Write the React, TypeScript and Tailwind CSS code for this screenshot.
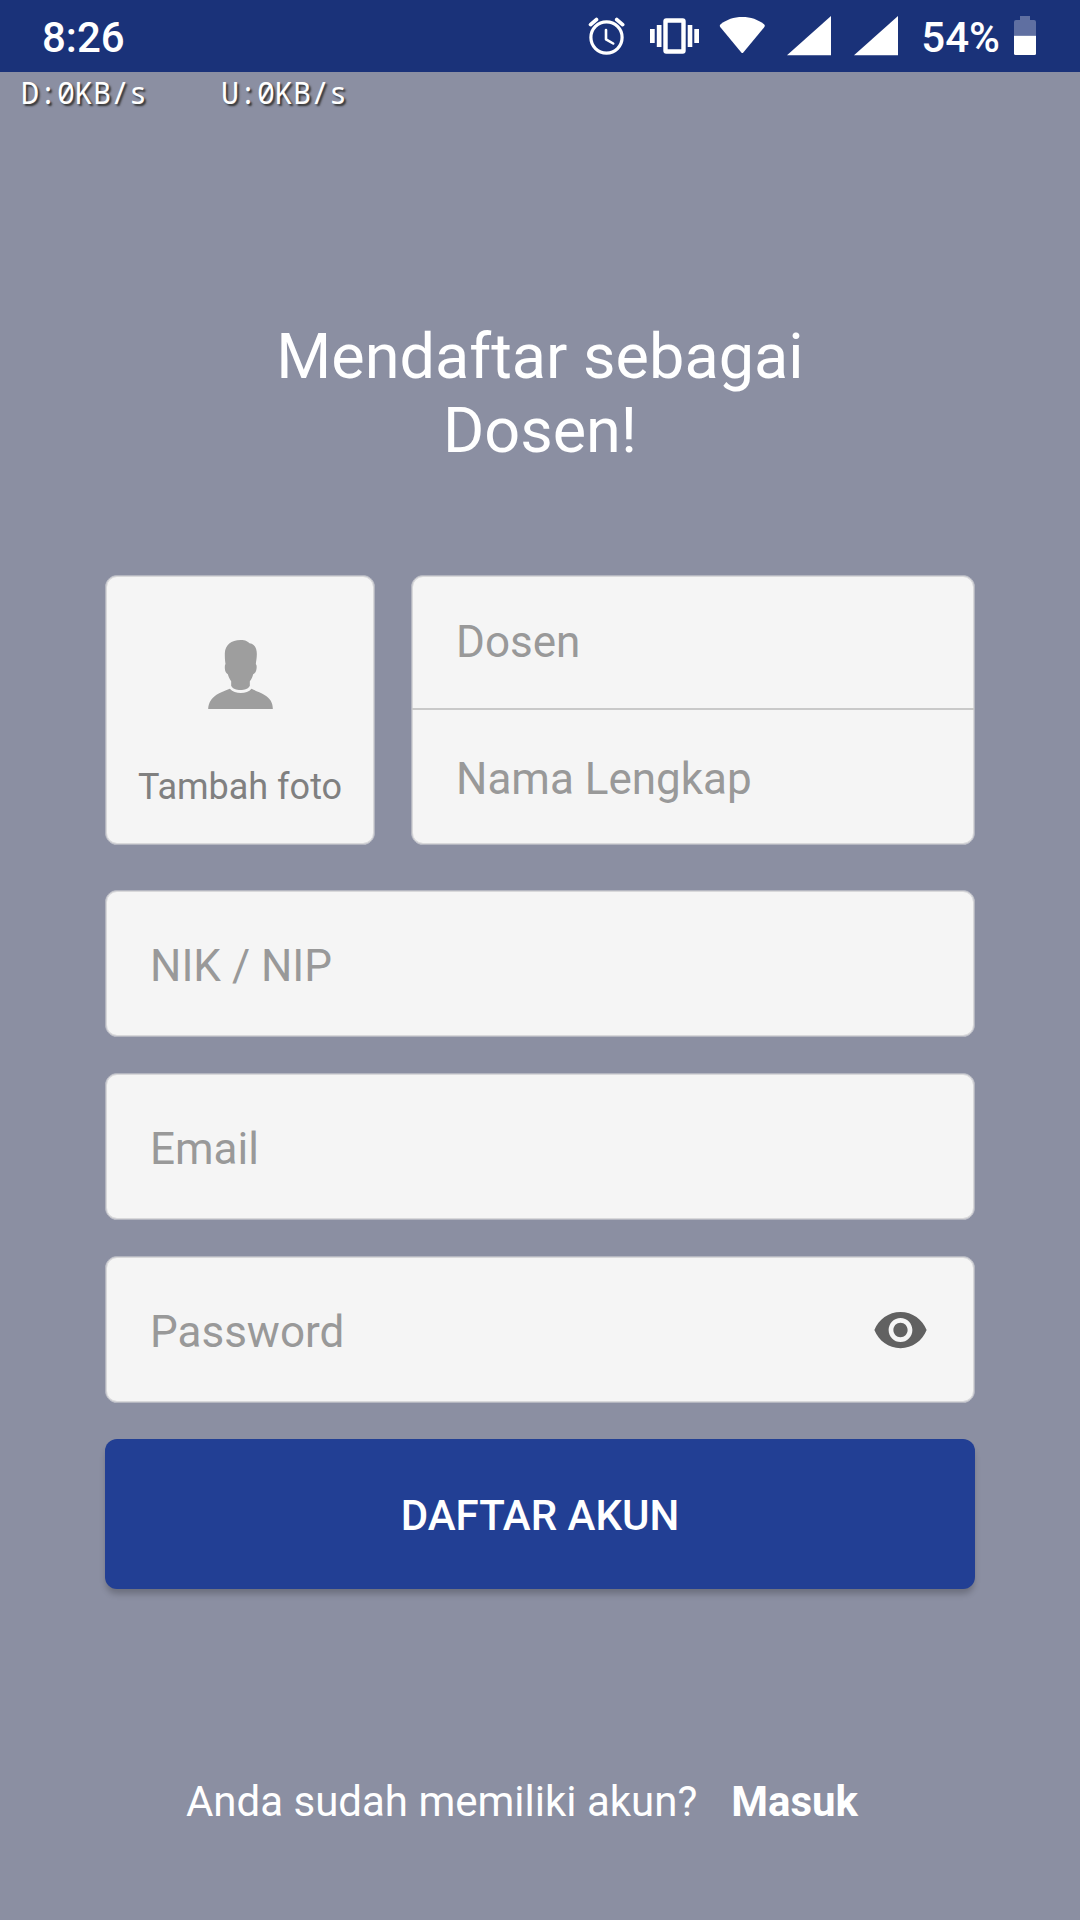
import type { InputHTMLAttributes, ReactNode } from "react";

function StatusBar() {
  return (
    <header className="flex h-[72px] items-center bg-[#1a3279] pr-11 pl-[42px] text-[42px] leading-none font-medium">
      <span className="flex-1 pt-1">8:26</span>
      <div className="flex items-center gap-5">
        <svg width="42" height="40" viewBox="0 0 42 40" fill="none" stroke="white" strokeLinecap="round" strokeLinejoin="round" aria-label="Alarm">
          <circle cx="18.5" cy="21.5" r="15.6" strokeWidth="3.2" />
          <path d="M2.6 8.6 8.4 3.6M28.8 3.6l5.8 5" strokeWidth="3.8" />
          <path d="M18 14v9.3l7.2 4.2" strokeWidth="2.6" />
        </svg>
        <svg width="49" height="40" viewBox="0 0 49 40" fill="white" aria-label="Vibrate">
          <path d="M0 13h4.7v14H0zM6.8 9h4.7v22H6.8zM37.7 9h4.6v22h-4.6zM44.3 13H49v14h-4.7z" />
          <path fillRule="evenodd" d="M16.3 2.3h16.4a3 3 0 0 1 3 3v29.4a3 3 0 0 1-3 3H16.3a3 3 0 0 1-3-3V5.300a3 3 0 0 1 3-3ZM17.700 6.700v26.600h13.600V6.700Z" />
        </svg>
        <svg width="48" height="40" viewBox="0 0 48 40" fill="white" aria-label="Wi-Fi">
          <path d="M22.300 36.500 1.200 11Q.2 9.400 1.600 8.200C7.500 3.600 14.800 1 23.300 1s15.800 2.600 21.700 7.200q1.400 1.200.4 2.800L24.300 36.500q-1 1-2 0Z" />
        </svg>
        <svg width="47" height="40" viewBox="0 0 47 40" fill="white" aria-label="Signal 1">
          <path d="M0 39.300 44 0v39.300Z" />
        </svg>
        <svg width="47" height="40" viewBox="0 0 47 40" fill="white" aria-label="Signal 2">
          <path d="M0 39.300 44 0v39.300Z" />
        </svg>
      </div>
      <span className="ml-5 pt-1">54%</span>
      <svg className="ml-3.5" width="22" height="40" viewBox="0 0 22 40" fill="white" aria-label="Battery">
        <path fillOpacity=".3" d="M6 0h10v4h4a2 2 0 0 1 2 2v13.700H0V6a2 2 0 0 1 2-2h4Z" />
        <path d="M0 19.700h22V37.500a1.500 1.500 0 0 1-1.500 1.500h-19A1.500 1.500 0 0 1 0 37.500Z" />
      </svg>
    </header>
  );
}

function PersonIcon() {
  return (
    <svg width="65" height="69" viewBox="355 240 194 207" fill="#9e9e9e" aria-hidden="true">
      <path d="M452 240C468 240 473 244 479 250C494 252 501 264 501 282C501 294 499 304 498 312C501 315 501 320 500 327C499 335 495 341 490 343C488 351 485 358 480 364V377C476 386 464 390 452 390C440 390 428 386 424 377V364C419 357 416 350 414 343C409 340 405 333 405 325C405 318 405 314 407 312C405 300 405 290 405 280C406 255 424 240 452 240Z" />
      <path d="M420 386C428 395 440 399 453 399C466 399 478 395 485 386C495 392 512 397 524 405C541 415 549 428 549 447H355C356 428 364 415 380 404C392 396 408 391 420 386Z" />
    </svg>
  );
}

function EyeIcon() {
  return (
    <svg width="57" height="58" viewBox="0 0 24 24" preserveAspectRatio="none" fill="#616161" aria-hidden="true">
      <path d="M12 4.500C7 4.500 2.730 7.610 1 12c1.730 4.390 6 7.500 11 7.500s9.270-3.110 11-7.500c-1.730-4.390-6-7.500-11-7.500zM12 17c-2.760 0-5-2.240-5-5s2.240-5 5-5 5 2.240 5 5-2.240 5-5 5zm0-8c-1.660 0-3 1.340-3 3s1.340 3 3 3 3-1.340 3-3-1.340-3-3-3z" />
    </svg>
  );
}

function TextInput({ label, ...rest }: { label: string } & InputHTMLAttributes<HTMLInputElement>) {
  return (
    <input
      aria-label={label}
      placeholder={label}
      className="h-full w-full min-w-0 flex-1 bg-transparent pl-11 text-[44px] text-[#616161] outline-none placeholder:text-[#999999]"
      {...rest}
    />
  );
}

function Field({ children }: { children: ReactNode }) {
  return (
    <div className="flex h-[147px] items-center rounded-xl border border-[#b4b6c0] bg-[#f5f5f5] pt-1 shadow-[inset_0_0_0_1px_#d8d8da]">
      {children}
    </div>
  );
}

export default function App() {
  return (
    <div className="flex min-h-screen flex-col bg-[#8b8fa2] font-['Roboto',sans-serif] text-white">
      <StatusBar />
      <div className="flex gap-[74px] pt-[3px] pl-[21px] font-['Droid_Sans_Mono','Noto_Sans_Mono','Liberation_Mono',monospace] text-[30px] leading-9 [text-shadow:2px_2px_2px_#333]">
        <span>D:0KB/s</span>
        <span>U:0KB/s</span>
      </div>

      <main className="px-[105px] pt-[209px]">
        <h1 className="mx-auto max-w-[600px] text-center text-[63px] leading-[74px]">Mendaftar sebagai Dosen!</h1>

        <form className="mt-[107px] flex flex-col gap-9" onSubmit={(e) => e.preventDefault()}>
          <div className="mb-[9px] flex h-[270px] gap-9">
            <button
              type="button"
              className="flex w-[270px] flex-col items-center rounded-xl border border-[#b4b6c0] bg-[#f5f5f5] pt-16 text-[36px] leading-[42px] text-[#808080] shadow-[inset_0_0_0_1px_#d8d8da]"
            >
              <PersonIcon />
              <span className="mt-[57px]">Tambah foto</span>
            </button>
            <div className="grid min-w-0 flex-1 grid-rows-2 divide-y-2 divide-[#c9c9c9] rounded-xl border border-[#b4b6c0] bg-[#f5f5f5] shadow-[inset_0_0_0_1px_#d8d8da]">
              <div className="flex">
                <TextInput label="Dosen" name="role" />
              </div>
              <div className="flex pt-1">
                <TextInput label="Nama Lengkap" name="name" />
              </div>
            </div>
          </div>

          <Field>
            <TextInput label="NIK / NIP" name="nik" />
          </Field>
          <Field>
            <TextInput label="Email" name="email" type="email" />
          </Field>
          <Field>
            <TextInput label="Password" name="password" type="password" />
            <button type="button" aria-label="Tampilkan password" className="mr-[45px] mb-1">
              <EyeIcon />
            </button>
          </Field>

          <button
            type="submit"
            className="h-[150px] rounded-xl bg-[#223f94] pt-0.5 text-[42px] font-medium shadow-[0_6px_6px_-1px_rgba(0,0,0,0.22)]"
          >
            DAFTAR AKUN
          </button>
        </form>
      </main>

      <footer className="mt-[188px] flex justify-center gap-[34px] pr-9 text-[42px] leading-[50px]">
        <p>Anda sudah memiliki akun?</p>
        <a href="#masuk" className="font-bold">
          Masuk
        </a>
      </footer>
    </div>
  );
}
